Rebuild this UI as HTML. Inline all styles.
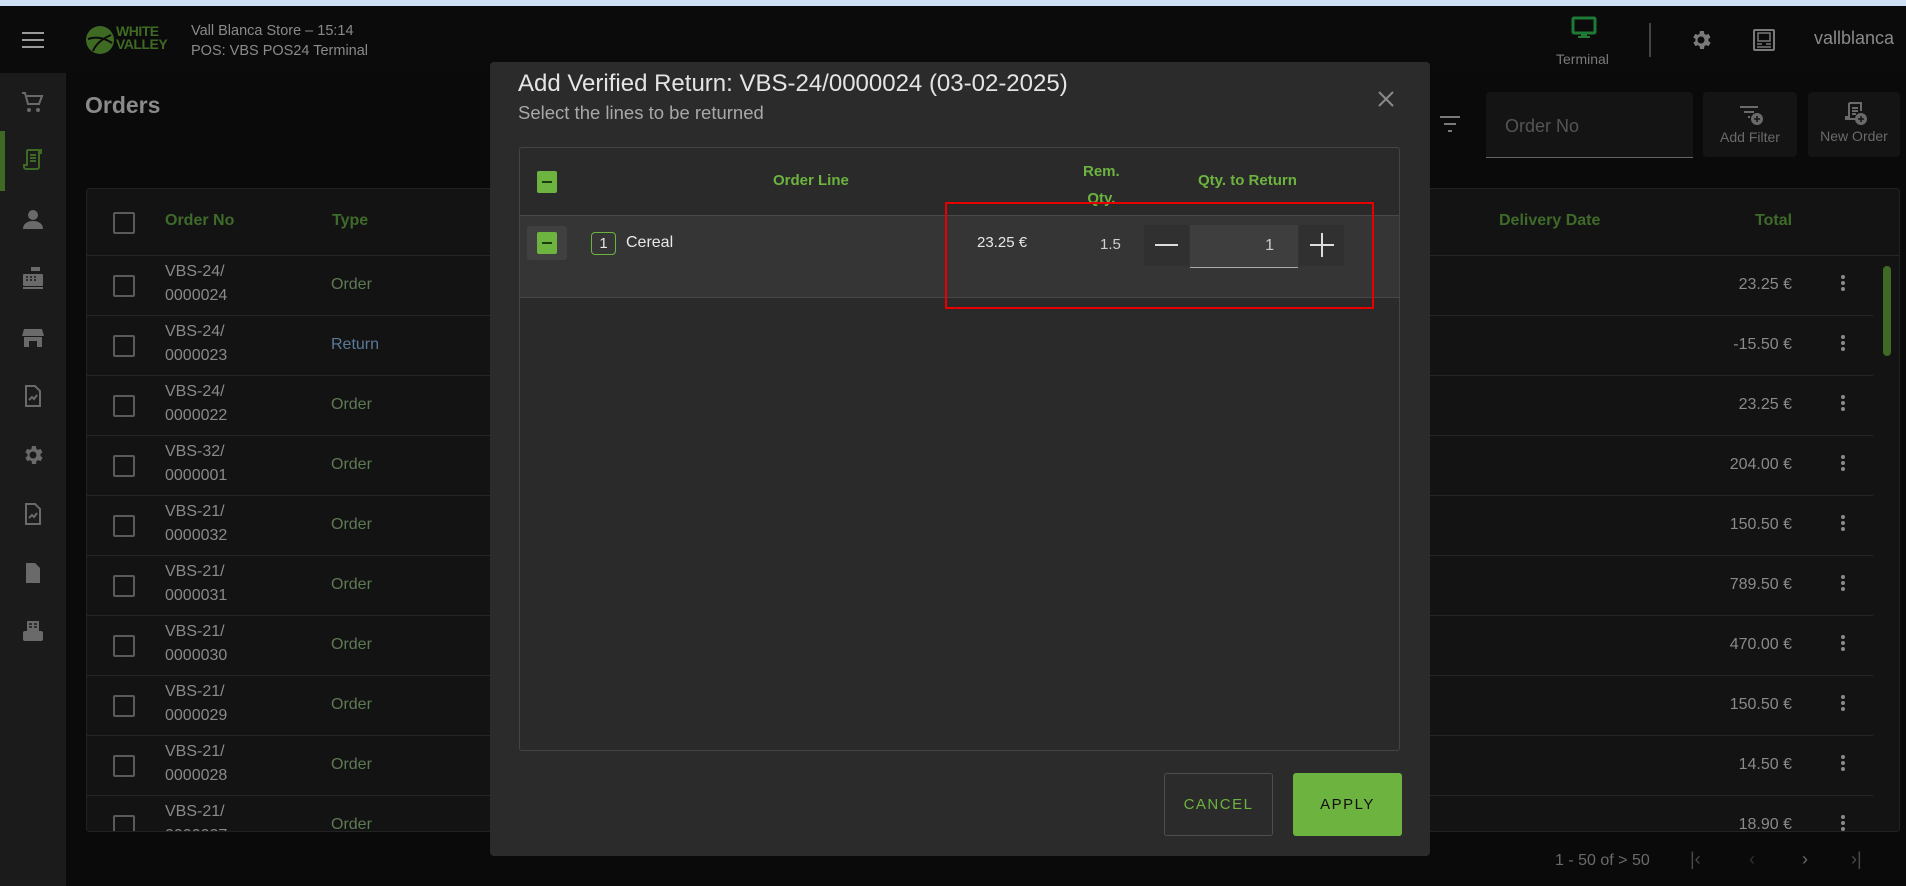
<!DOCTYPE html>
<html><head><meta charset="utf-8"><style>
*{box-sizing:border-box;margin:0;padding:0}
body{width:1906px;height:886px;overflow:hidden;background:#0a0a0a;font-family:"Liberation Sans",sans-serif;position:relative}
.abs{position:absolute}
.topstrip{left:0;top:0;width:1906px;height:6px;background:#d0e0f5}
.header{left:0;top:6px;width:1906px;height:67px;background:#0b0b0b}
.side{left:0;top:73px;width:66px;height:813px;background:#1b1b1b}
.ico{position:absolute;left:21px;width:24px;height:24px}
.table{left:86px;top:188px;width:1814px;height:644px;background:#131313;border:1px solid #222;border-radius:4px;overflow:hidden}
.row{position:absolute;left:0;width:1786px;height:60px;border-bottom:1px solid #262626}
.cb{position:absolute;left:16px;width:20px;height:20px;border:2px solid #5a5a5a;border-radius:2px}
.ono{position:absolute;left:78px;color:#8a8a8a;font-size:16px;line-height:24px}
.typ{position:absolute;left:244px;font-size:16px}
.tot{position:absolute;right:81px;color:#8a8a8a;font-size:16px}
.keb{position:absolute;left:1754px;width:4px}
.keb i{display:block;width:4px;height:4px;border-radius:2px;background:#8a8a8a;margin-bottom:2px}
.hd{color:#3f6b2a;font-weight:bold;font-size:16px;position:absolute;top:37px}
.modal{left:490px;top:62px;width:940px;height:794px;background:#2b2b2b;border-radius:4px}
.g{color:#6db33f}
</style></head><body>
<div class="abs topstrip"></div>
<div class="abs header">
 <div class="abs" style="left:22px;top:26px;width:22px">
  <div style="height:2px;background:#9a9a9a;margin-bottom:5px"></div><div style="height:2px;background:#9a9a9a;margin-bottom:5px"></div><div style="height:2px;background:#9a9a9a"></div></div>
 <svg class="abs" style="left:85px;top:19px" width="30" height="30" viewBox="0 0 30 30"><circle cx="15" cy="15" r="14" fill="#3e6a24"/><path d="M3 14 Q15 10 27 18 M8 26 Q12 16 26 10" stroke="#0b0b0b" stroke-width="2" fill="none"/></svg>
 <div class="abs" style="left:116px;top:19px;color:#3e6a24;font-weight:bold;font-size:14px;line-height:13px;letter-spacing:-0.5px">WHITE<br>VALLEY</div>
 <div class="abs" style="left:191px;top:15px;color:#8a8a8a;font-size:14.5px;line-height:20px">Vall Blanca Store – 15:14<br>POS: VBS POS24 Terminal</div>
 <svg class="abs" style="left:1571px;top:10px" width="26" height="24" viewBox="0 0 26 24"><rect x="2" y="2" width="22" height="15" rx="1" fill="none" stroke="#1e7a35" stroke-width="3"/><rect x="10" y="17" width="6" height="3" fill="#1e7a35"/><rect x="7" y="20" width="12" height="2" fill="#1e7a35"/></svg>
 <div class="abs" style="left:1556px;top:45px;color:#7a7a7a;font-size:14px">Terminal</div>
 <div class="abs" style="left:1649px;top:17px;width:2px;height:34px;background:#444"></div>
 <svg class="abs" style="left:1689px;top:22px" width="24" height="24" viewBox="0 0 24 24"><path fill="#7a7a7a" d="M19.4 13c.04-.33.06-.66.06-1s-.02-.67-.06-1l2.1-1.65-2-3.46-2.5 1a7.3 7.3 0 0 0-1.7-1L14.9 3h-4l-.4 2.9c-.6.25-1.2.6-1.7 1l-2.5-1-2 3.460L6.5 11c-.04.33-.06.66-.06 1s.02.67.06 1l-2.1 1.65 2 3.46 2.5-1c.5.4 1.1.75 1.7 1l.4 2.9h4l.4-2.9c.6-.25 1.2-.6 1.7-1l2.5 1 2-3.46zM12 15.5a3.5 3.5 0 1 1 0-7 3.5 3.5 0 0 1 0 7z"/></svg>
 <svg class="abs" style="left:1752px;top:22px" width="24" height="24" viewBox="0 0 24 24"><rect x="2" y="2" width="20" height="20" rx="1" fill="none" stroke="#7a7a7a" stroke-width="2"/><rect x="6" y="5" width="12" height="8" fill="none" stroke="#7a7a7a" stroke-width="1.5"/><path d="M5 16h5M14 16h5M5 19h14" stroke="#7a7a7a" stroke-width="1.5"/></svg>
 <div class="abs" style="left:1814px;top:22px;color:#8a8a8a;font-size:18px">vallblanca</div>
</div>
<div class="abs side">
 <div class="abs" style="left:0;top:58px;width:5px;height:60px;background:#3e6a24"></div>
 <svg class="ico" style="top:17px" viewBox="0 0 24 24"><path fill="none" stroke="#6a6a6a" stroke-width="2" d="M1 3h3l3 11h11l3-8H6"/><circle cx="8" cy="20" r="2" fill="#6a6a6a"/><circle cx="17" cy="20" r="2" fill="#6a6a6a"/></svg>
 <svg class="ico" style="top:74px" viewBox="0 0 24 24"><path fill="none" stroke="#3e6a24" stroke-width="2" d="M6 3h14v4M6 3v15H3v2a2 2 0 0 0 2 2h11a2 2 0 0 0 2-2V3M9 8h6M9 11h6M9 14h6"/></svg>
 <svg class="ico" style="top:134px" viewBox="0 0 24 24"><circle cx="12" cy="8" r="5" fill="#6a6a6a"/><path fill="#6a6a6a" d="M2 22c0-5 4-8 10-8s10 3 10 8z"/></svg>
 <svg class="ico" style="top:193px" viewBox="0 0 24 24"><rect x="10" y="1" width="9" height="4" fill="#6a6a6a"/><rect x="2" y="8" width="20" height="12" rx="1" fill="#6a6a6a"/><path d="M5 11h2M9 11h2M13 11h2M5 14h2M9 14h2M13 14h2" stroke="#1b1b1b" stroke-width="1.5"/><rect x="2" y="21" width="20" height="2" fill="#6a6a6a"/></svg>
 <svg class="ico" style="top:253px" viewBox="0 0 24 24"><path fill="#6a6a6a" d="M3 3h18l2 7H1zM3 11h18v10h-5v-6H8v6H3z"/></svg>
 <svg class="ico" style="top:311px" viewBox="0 0 24 24"><path fill="none" stroke="#6a6a6a" stroke-width="2" d="M5 2h9l5 5v15H5z"/><path d="M8 16l3-3 2 2 3-4" stroke="#6a6a6a" stroke-width="2" fill="none"/></svg>
 <svg class="ico" style="top:370px" viewBox="0 0 24 24"><path fill="#6a6a6a" d="M19.4 13c.04-.33.06-.66.06-1s-.02-.67-.06-1l2.1-1.65-2-3.46-2.5 1a7.3 7.3 0 0 0-1.7-1L14.9 3h-4l-.4 2.9c-.6.25-1.2.6-1.7 1l-2.5-1-2 3.46L6.5 11c-.04.33-.06.66-.06 1s.02.67.06 1l-2.1 1.65 2 3.46 2.5-1c.5.4 1.1.75 1.7 1l.4 2.9h4l.4-2.9c.6-.25 1.2-.6 1.7-1l2.5 1 2-3.46zM12 15.5a3.5 3.5 0 1 1 0-7 3.5 3.5 0 0 1 0 7z"/></svg>
 <svg class="ico" style="top:429px" viewBox="0 0 24 24"><path fill="none" stroke="#6a6a6a" stroke-width="2" d="M5 2h9l5 5v15H5z"/><path d="M8 16l3-3 2 2 3-4" stroke="#6a6a6a" stroke-width="2" fill="none"/></svg>
 <svg class="ico" style="top:488px" viewBox="0 0 24 24"><path fill="#6a6a6a" d="M5 2h9l5 5v15H5z"/></svg>
 <svg class="ico" style="top:546px" viewBox="0 0 24 24"><rect x="6" y="2" width="12" height="10" fill="#6a6a6a"/><rect x="2" y="12" width="20" height="10" rx="2" fill="#6a6a6a"/><path d="M8 5h3M13 5h3M8 8h3M13 8h3" stroke="#1b1b1b" stroke-width="1.5"/></svg>
</div>
<div class="abs" style="left:85px;top:92px;color:#8a8a8a;font-size:23px;font-weight:bold">Orders</div>
<svg class="abs" style="left:1438px;top:114px" width="24" height="22" viewBox="0 0 24 22"><path d="M2 3h20M6 10h12M10 17h4" stroke="#7a7a7a" stroke-width="2"/></svg>
<div class="abs" style="left:1486px;top:92px;width:207px;height:66px;background:#141414;border-bottom:1px solid #666;border-radius:4px 4px 0 0"><div style="position:absolute;left:19px;top:24px;color:#555;font-size:18px">Order No</div></div>
<div class="abs" style="left:1703px;top:92px;width:94px;height:65px;background:#141414;border-radius:4px;text-align:center;color:#6a6a6a;font-size:14px"><svg style="margin-top:12px" width="28" height="22" viewBox="0 0 28 22"><path d="M4 3h18M8 8h10M12 13h2" stroke="#6a6a6a" stroke-width="2"/><circle cx="21" cy="15" r="6" fill="#6a6a6a"/><path d="M18 15h6M21 12v6" stroke="#141414" stroke-width="1.5"/></svg><div style="margin-top:0">Add Filter</div></div>
<div class="abs" style="left:1808px;top:92px;width:92px;height:65px;background:#141414;border-radius:4px;text-align:center;color:#6a6a6a;font-size:14px"><svg style="margin-top:8px" width="26" height="26" viewBox="0 0 26 26"><path fill="none" stroke="#6a6a6a" stroke-width="2" d="M8 3h12v4M8 3v14H5v2h10M20 3v8M11 8h6M11 11h6M11 14h4"/><circle cx="20" cy="19" r="6" fill="#6a6a6a"/><path d="M17 19h6M20 16v6" stroke="#141414" stroke-width="1.5"/></svg><div style="margin-top:-1px">New Order</div></div>

<div class="abs table">
 <div class="row" style="top:0;height:67px;width:1814px">
  <div class="cb" style="top:23px;left:26px;width:22px;height:22px"></div>
  <div class="hd" style="left:78px;top:23px">Order No</div>
  <div class="hd" style="left:245px;top:23px">Type</div>
  <div class="hd" style="left:1412px;top:23px">Delivery Date</div>
  <div class="hd" style="left:1668px;top:23px">Total</div>
 </div>
 <div id="rows"></div>
 <div class="abs" style="left:1796px;top:77px;width:8px;height:90px;border-radius:4px;background:#3e6a24"></div>
</div>
<div class="abs" style="left:1555px;top:852px;color:#6a6a6a;font-size:16px">1 - 50 of &gt; 50</div>
<div class="abs" style="left:1690px;top:849px;color:#4a4a4a;font-size:18px">|‹</div>
<div class="abs" style="left:1749px;top:849px;color:#333;font-size:18px">‹</div>
<div class="abs" style="left:1802px;top:849px;color:#6a6a6a;font-size:18px">›</div>
<div class="abs" style="left:1851px;top:849px;color:#4a4a4a;font-size:18px">›|</div>

<div class="abs modal">
 <div class="abs" style="left:28px;top:8px;color:#e4e4e4;font-size:24px">Add Verified Return: VBS-24/0000024 (03-02-2025)</div>
 <div class="abs" style="left:28px;top:40px;color:#a8a8a8;font-size:18.5px">Select the lines to be returned</div>
 <svg class="abs" style="left:887px;top:28px" width="18" height="18" viewBox="0 0 18 18"><path d="M2 2l14 14M16 2L2 16" stroke="#8a8a8a" stroke-width="2"/></svg>
 <div class="abs" style="left:29px;top:85px;width:881px;height:604px;border:1px solid #444;border-radius:3px;background:#2a2a2a;overflow:hidden">
  <div class="abs" style="left:17px;top:23px;width:20px;height:22px;background:#6db33f;border-radius:2px"><div style="margin:10px 5px 0;height:2px;background:#1b3a10"></div></div>
  <div class="abs g" style="left:253px;top:24px;font-weight:bold;font-size:15px">Order Line</div>
  <div class="abs g" style="left:563px;top:10px;font-weight:bold;font-size:15px;line-height:27px;text-align:center">Rem.<br>Qty.</div>
  <div class="abs g" style="left:678px;top:24px;font-weight:bold;font-size:15px">Qty. to Return</div>
  <div class="abs" style="left:0;top:67px;width:881px;height:83px;background:#353535;border-top:1px solid #484848;border-bottom:1px solid #484848">
   <div class="abs" style="left:7px;top:10px;width:40px;height:34px;background:#404040;border-radius:3px"><div style="margin:6px 10px;width:20px;height:22px;background:#6db33f;border-radius:2px;padding-top:10px"><div style="margin:0 5px;height:2px;background:#1b3a10"></div></div></div>
   <div class="abs" style="left:71px;top:16px;width:25px;height:23px;border:1px solid #6db33f;border-radius:4px;color:#e4e4e4;font-size:15px;text-align:center;line-height:21px">1</div>
   <div class="abs" style="left:106px;top:18px;color:#e8e8e8;font-size:16px">Cereal</div>
   <div class="abs" style="left:457px;top:18px;color:#e8e8e8;font-size:15px">23.25 €</div>
   <div class="abs" style="left:580px;top:20px;color:#d0d0d0;font-size:15px">1.5</div>
   <div class="abs" style="left:624px;top:9px;width:45px;height:41px;background:#303030"><div style="margin:19px 11px 0;height:2px;background:#ddd"></div></div>
   <div class="abs" style="left:670px;top:9px;width:108px;height:43px;background:#3e3e3e;border-bottom:1px solid #aaa;color:#ccc;font-size:16px;text-align:right;padding:12px 24px 0 0">1</div>
   <div class="abs" style="left:779px;top:9px;width:45px;height:41px;background:#303030"><div style="position:absolute;left:11px;top:19px;width:24px;height:2px;background:#ddd"></div><div style="position:absolute;left:22px;top:8px;width:2px;height:24px;background:#ddd"></div></div>
  </div>
 </div>
 <div class="abs" style="left:455px;top:140px;width:429px;height:107px;border:2px solid #e80000"></div>
 <div class="abs" style="left:674px;top:711px;width:109px;height:63px;border:1px solid #4e4e4e;border-radius:3px;color:#6db33f;font-size:15px;letter-spacing:1.5px;text-align:center;line-height:61px">CANCEL</div>
 <div class="abs" style="left:803px;top:711px;width:109px;height:63px;background:#6db33f;border-radius:3px;color:#111;font-size:15px;letter-spacing:1.5px;text-align:center;line-height:63px">APPLY</div>
</div>
<script>
var d=[["24/","0000024","Order","23.25 €"],["24/","0000023","Return","-15.50 €"],["24/","0000022","Order","23.25 €"],["32/","0000001","Order","204.00 €"],["21/","0000032","Order","150.50 €"],["21/","0000031","Order","789.50 €"],["21/","0000030","Order","470.00 €"],["21/","0000029","Order","150.50 €"],["21/","0000028","Order","14.50 €"],["21/","0000027","Order","18.90 €"]];
var h="";d.forEach(function(r,i){var t=67+i*60;
h+='<div class="row" style="top:'+t+'px"><div class="cb" style="top:19px;left:26px;width:22px;height:22px"></div><div class="ono" style="top:4px">VBS-'+r[0]+'<br>'+r[1]+'</div><div class="typ" style="top:20px;color:'+(r[2]=="Return"?"#5b7a99":"#5e7a55")+'">'+r[2]+'</div><div class="tot" style="top:20px">'+r[3]+'</div><div class="keb" style="top:19px"><i></i><i></i><i></i></div></div>';});
document.getElementById("rows").innerHTML=h;
</script>
</body></html>
